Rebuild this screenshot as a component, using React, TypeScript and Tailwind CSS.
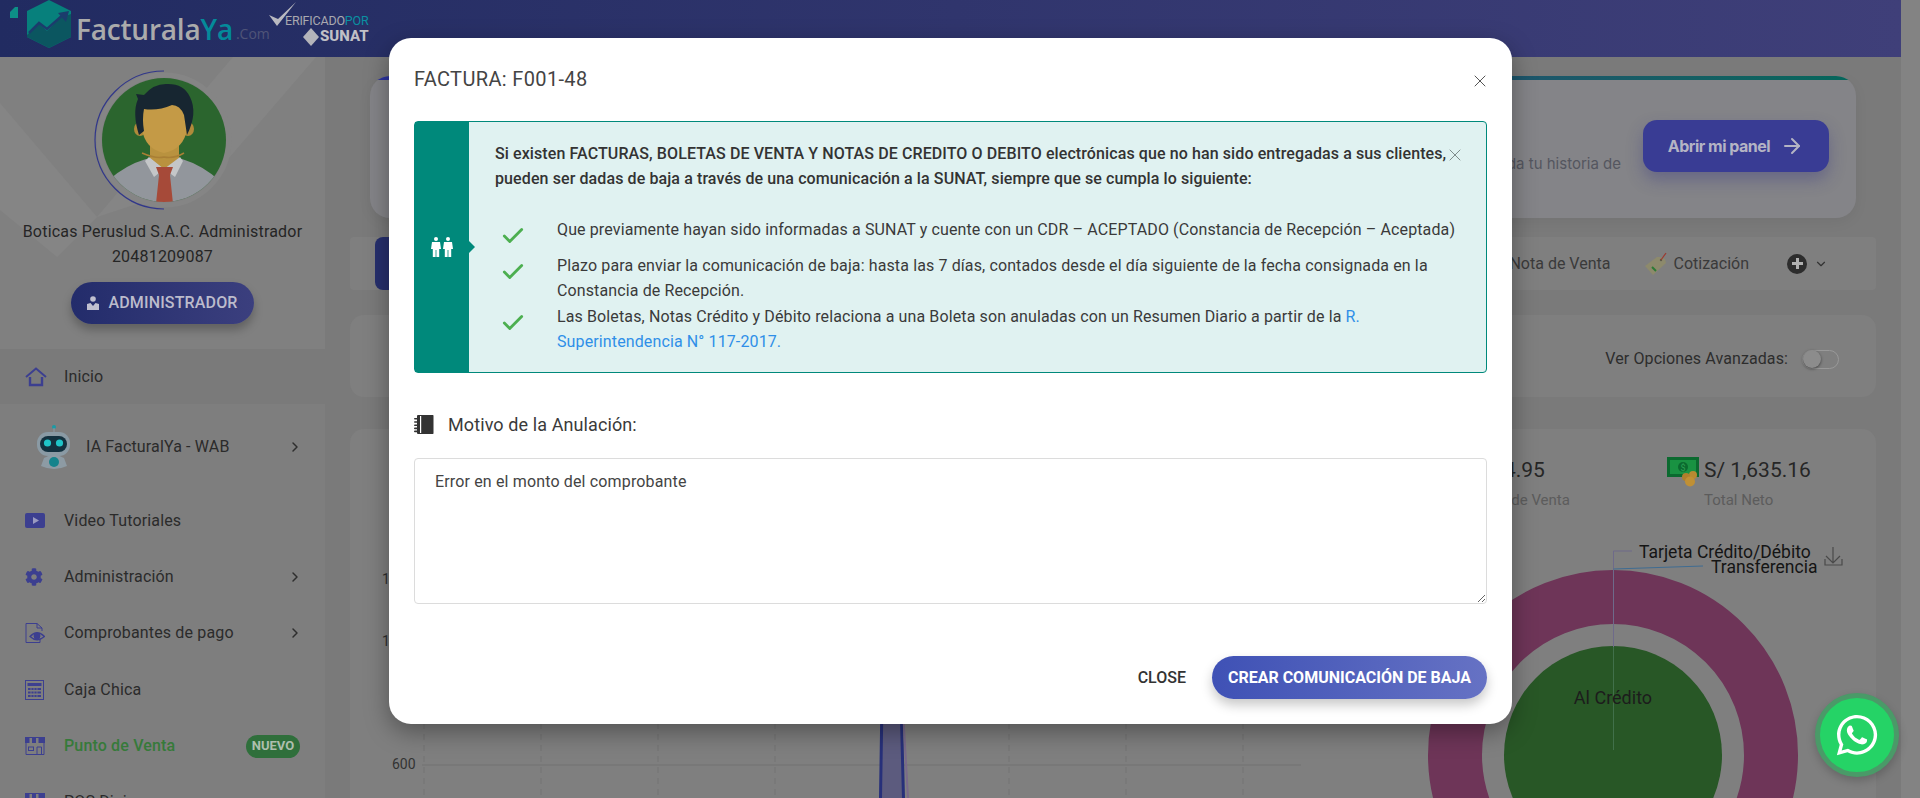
import React from "react";
import { FaWhatsapp, FaCog } from "react-icons/fa";
import { ChevronRight, ChevronDown, ArrowRight, X, Check } from "lucide-react";

const Logo = () => (
  <div className="flex items-center w-[380px] h-[57px] relative">
    <svg width="72" height="57" viewBox="0 0 72 57" className="shrink-0">
      <path d="M10 12 L15 7 L18 7 L18 18 L10 18 Z" fill="#0d8f87" />
      <polygon points="49,0 71,11 71,37 49,48 27,37 27,11" fill="#07807c" />
      <polygon points="27,35 39,24 47,31 60,18 71,14 71,37 49,48 27,37" fill="#0b5660" />
      <path d="M29 33 L39 23 L47 29 L64 14" stroke="#1b3c6c" strokeWidth="2.5" fill="none" />
      <polygon points="58,13 69,11 66,22" fill="#1b3c6c" />
    </svg>
    <span className="ml-[4px] text-[28px] leading-none font-['Open_Sans','Roboto',sans-serif] font-semibold tracking-[-0.2px] text-[#ababab]">Facturala</span>
    <span className="text-[28px] leading-none font-['Open_Sans','Roboto',sans-serif] font-semibold tracking-[-0.2px] text-[#048a9a]">Ya</span>
    <span className="ml-[3px] text-[14px] mt-[10px] text-[#4f5478] font-['Open_Sans',sans-serif]">.Com</span>
  </div>
);

const Sunat = () => (
  <div className="relative w-[100px] h-[57px] ml-[-112px] shrink-0 font-['Roboto',sans-serif]">
    <svg width="30" height="28" viewBox="0 0 30 28" className="absolute left-[0px] top-[1px]">
      <path d="M1 14 L9 25 L28 1 L10 18 Z" fill="#b9b9c0" />
    </svg>
    <div className="absolute left-[17px] top-[14px] text-[12.5px] leading-[14px] tracking-[-0.2px] whitespace-nowrap text-[#a9a9b0]">
      ERIFICADO<span className="text-[#0a90a2]">POR</span>
    </div>
    <svg width="16" height="18" viewBox="0 0 16 18" className="absolute left-[35px] top-[28px]">
      <polygon points="8,0 16,9 8,18 0,9" fill="#b4b4ba" />
    </svg>
    <div className="absolute left-[52px] top-[29px] text-[15px] leading-[15px] font-extrabold text-[#c0c0c6]">SUNAT</div>
  </div>
);

const Avatar = () => (
  <svg width="140" height="144" viewBox="0 0 140 144" className="shrink-0">
    <circle cx="72" cy="71" r="65" fill="none" stroke="#858585" strokeWidth="5" />
    <path d="M72 2 A69 69 0 0 0 72 140" fill="none" stroke="#31378a" strokeWidth="1.2" />
    <clipPath id="av"><circle cx="72" cy="71" r="62" /></clipPath>
    <g clipPath="url(#av)">
      <rect x="0" y="0" width="144" height="144" fill="#2b652e" />
      <path d="M18 110 Q34 96 54 90 L90 90 Q110 96 128 112 L128 144 L18 144 Z" fill="#92969c" />
      <path d="M58 66 L87 66 L87 92 L72 106 L58 92 Z" fill="#b9923f" />
      <ellipse cx="48" cy="60" rx="6" ry="7" fill="#b08a3a" />
      <ellipse cx="96" cy="60" rx="6" ry="7" fill="#b08a3a" />
      <path d="M50 36 L95 36 L95 60 Q92 80 72 84 Q53 80 50 60 Z" fill="#c49a46" />
      <path d="M50 84 Q64 90 72 88 Q82 90 92 84" fill="none" stroke="#a97f35" strokeWidth="1.5" />
      <path d="M47 66 Q40 44 46 30 L44 25 L52 26 Q62 14 76 15 Q92 15 98 28 Q106 44 95 66 L92 46 Q88 36 80 36 Q66 42 52 40 Q50 50 52 62 Z" fill="#172631" />
      <path d="M57 88 L72 100 L62 108 L53 92 Z M88 88 L72 100 L83 108 L91 92 Z" fill="#c4c6c8" />
      <path d="M64 98 L81 98 L78 106 L82 144 L63 144 L67 106 Z" fill="#a64a39" />
    </g>
  </svg>
);

const c = "#3c3f90";
const IconHome = () => (
  <svg width="22" height="20" viewBox="0 0 22 20"><path d="M1 10 L11 1.5 L21 10" fill="none" stroke={c} strokeWidth="2" /><path d="M5 10 V18 H17 V10" fill="none" stroke={c} strokeWidth="2.4" /></svg>
);
const IconVideo = () => (
  <svg width="20" height="16" viewBox="0 0 20 16"><rect width="20" height="15" rx="2" fill={c} /><polygon points="8,4 14,7.5 8,11" fill="#9a9ac0" /></svg>
);
const IconDoc = () => (
  <svg width="20" height="20" viewBox="0 0 20 20" fill="none" stroke={c} strokeWidth="1"><path d="M1 .5 H12 L17 5 V8 M1 .5 V19.5 H15 V17" /><path d="M12 .5 V5 H17" /><path d="M5 13.5 Q12 6 19.5 13.5 Q12 20 5 13.5Z" strokeWidth="1.3" /><circle cx="12" cy="13" r="3" fill={c} /></svg>
);
const IconCalc = () => (
  <svg width="19" height="20" viewBox="0 0 19 20"><rect x=".5" y=".5" width="18" height="19" fill="none" stroke={c} /><rect x="2.5" y="3" width="14" height="3" fill={c} /><g fill={c}><rect x="3" y="8" width="13" height="2" /><rect x="3" y="11.5" width="13" height="2" /><rect x="3" y="15" width="13" height="2" /></g><g fill="#7e7e7e"><rect x="5.6" y="8" width=".8" height="9" /><rect x="8.6" y="8" width=".8" height="9" /><rect x="11.6" y="8" width=".8" height="9" /></g></svg>
);
const IconStore = () => (
  <svg width="20" height="18" viewBox="0 0 20 18"><rect y="0" width="20" height="6" fill={c} /><rect x="4.5" y="1" width="2.5" height="5" fill="#7e7e7e" /><rect x="11" y="1" width="2.5" height="5" fill="#7e7e7e" /><path d="M1 6 V17.5 H19 V6" fill="none" stroke={c} /><rect x="3.5" y="10" width="5" height="3.5" fill="none" stroke={c} /><path d="M12 17 V10 H16.5 V17" fill="none" stroke={c} /></svg>
);
const IconRobot = () => (
  <svg width="36" height="46" viewBox="0 0 36 46">
    <circle cx="18" cy="3" r="2" fill="#1b9aa5" /><rect x="17.5" y="4" width="1" height="4" fill="#8a9aa5" />
    <rect x="1" y="8" width="33" height="24" rx="11" fill="#8a9aa4" />
    <rect x="4" y="12" width="27" height="16" rx="8" fill="#13313f" />
    <circle cx="11.5" cy="19" r="3.6" fill="#1fc4c8" /><circle cx="23.5" cy="19" r="3.6" fill="#1fc4c8" />
    <path d="M8 34 Q18 28 28 34 L31 42 Q18 48 5 42Z" fill="#8d9ba4" />
    <circle cx="18" cy="38" r="5" fill="#15838c" />
  </svg>
);

const Row = ({ icon, label, chevron, className = "h-[56px]", text = "text-[#2b2b2b]", extra }: { icon: React.ReactNode; label: string; chevron?: boolean; className?: string; text?: string; extra?: React.ReactNode }) => (
  <div className={`flex items-center pl-[25px] pr-[25px] shrink-0 ${className}`}>
    <div className="w-[39px] shrink-0 flex items-center">{icon}</div>
    <span className={`text-[16px] tracking-[0.15px] flex-1 whitespace-nowrap ${text}`}>{label}</span>
    {chevron && <ChevronRight size={16} strokeWidth={2.2} className="text-[#2e2e2e] mr-[-3px]" />}
    {extra}
  </div>
);

const Sidebar = () => (
  <aside className="w-[325px] shrink-0 bg-[#7e7e7e] flex flex-col">
    <div className="relative h-[292px] bg-[#808080] shrink-0 flex flex-col items-center overflow-hidden">
      <svg width="325" height="292" viewBox="0 0 325 292" className="absolute inset-0">
        <polygon points="0,46 97,160 57,200 0,153" fill="#858585" />
        <polygon points="233,0 316,0 210,123 97,160" fill="#858585" />
      </svg>
      <div className="relative flex flex-col items-center w-full">
        <div className="mt-[12px] ml-[-2px] h-[144px]"><Avatar /></div>
        <div className="mt-[6px] text-[16px] leading-[25px] text-[#252525] text-center whitespace-nowrap tracking-[0.2px]">
          Boticas Peruslud S.A.C. Administrador
          <br />
          20481209087
        </div>
        <div className="mt-[13px] w-[183px] h-[42px] rounded-full bg-gradient-to-r from-[#232c6b] to-[#3b3f7e] shadow-[0_6px_10px_rgba(0,0,0,0.25)] flex items-center justify-center gap-[9px]">
          <svg width="12" height="14" viewBox="0 0 12 14"><circle cx="6" cy="3" r="2.8" fill="#c0c0d0" /><path d="M0 14 V8 L3.5 7 L6 10 L8.5 7 L12 8 V14Z" fill="#c0c0d0" /></svg>
          <span className="text-[16px] tracking-[0.15px] font-medium text-[#bcbccc]">ADMINISTRADOR</span>
        </div>
      </div>
    </div>
    <Row icon={<IconHome />} label="Inicio" className="h-[55px] bg-[#7a7a7a]" />
    <div className="flex items-center pl-[36px] pr-[25px] h-[86px] shrink-0">
      <div className="w-[50px] shrink-0"><IconRobot /></div>
      <span className="text-[16px] tracking-[0.15px] flex-1 text-[#2b2b2b] whitespace-nowrap">IA FacturalYa - WAB</span>
      <ChevronRight size={16} strokeWidth={2.2} className="text-[#2e2e2e] mr-[-3px]" />
    </div>
    <div className="h-[3px] shrink-0" />
    <Row icon={<IconVideo />} label="Video Tutoriales" />
    <Row icon={<FaCog size={18} color={c} />} label="Administración" chevron />
    <Row icon={<IconDoc />} label="Comprobantes de pago" chevron />
    <Row icon={<IconCalc />} label="Caja Chica" className="h-[57px]" />
    <Row
      icon={<IconStore />}
      label="Punto de Venta"
      text="text-[#367a3a] font-medium"
      extra={<span className="w-[54px] h-[23px] rounded-full bg-[#2f6f3b] text-[#aebfae] text-[13px] font-bold flex items-center justify-center">NUEVO</span>}
    />
    <Row icon={<IconStore />} label="POS Dinix" />
  </aside>
);

const Tag = () => (
  <svg width="24" height="24" viewBox="0 0 24 24"><polygon points="16,5 21,7 22,11 9,23 1,14 13,5" fill="#8d8a6c" /><circle cx="17" cy="8" r="1.2" fill="#5b5b4c" /><path d="M17 8 L22 1" stroke="#9c3a30" strokeWidth="1.2" /><path d="M8 15 L12 19" stroke="#2d7a35" strokeWidth="2" /></svg>
);
const Money = () => (
  <svg width="32" height="30" viewBox="0 0 32 30"><rect x="0" y="0" width="32" height="20" fill="#0b6a2f" /><rect x="3" y="3" width="26" height="14" fill="#199242" /><circle cx="16" cy="10" r="5" fill="#0b6a2f" /><text x="16" y="13.5" fontSize="9" textAnchor="middle" fill="#2aa052" fontFamily="Roboto">$</text><circle cx="26" cy="18" r="4" fill="#b88a32" /><circle cx="19" cy="20" r="4" fill="#b07f2c" /><circle cx="23" cy="24.5" r="5" fill="#c09035" /></svg>
);

const LineChart = () => (
  <svg width="1050" height="369" viewBox="350 429 1050 369" className="shrink-0" fontFamily="Roboto, sans-serif">
    {[424, 541, 658, 775, 892, 1009, 1126, 1243].map((x) => (
      <line key={x} x1={x} x2={x} y1="470" y2="798" stroke="#757575" strokeDasharray="6 5" />
    ))}
    <line x1="422" x2="1301" y1="765" y2="765" stroke="#767676" strokeWidth="1.5" />
    <line x1="422" x2="1301" y1="703" y2="703" stroke="#767676" />
    <text x="382" y="584" fontSize="14" fill="#2e2e2e">1,200</text>
    <text x="382" y="646" fontSize="14" fill="#2e2e2e">1,000</text>
    <text x="392" y="769" fontSize="14" fill="#333">600</text>
    <polygon points="880,798 881,700 902,700 904,798" fill="#5c5b7e" />
    <path d="M880.5 798 L882 700 M903.5 798 L901 700" stroke="#27307a" strokeWidth="3" fill="none" />
    <path d="M903 710 L908 798" stroke="#7a6a8a" strokeWidth="2" fill="none" />
  </svg>
);

const Donut = () => (
  <svg width="476" height="310" viewBox="1400 488 476 310" className="shrink-0 -mt-[22px]" fontFamily="Roboto, sans-serif">
    <circle cx="1613" cy="755" r="158" fill="none" stroke="#6e3558" strokeWidth="54" />
    <circle cx="1613" cy="755" r="109" fill="#285726" />
    <path d="M1632 551 H1613.5 V700" fill="none" stroke="#6e6a8a" strokeWidth="1" />
    <path d="M1613.5 569 L1703 566" fill="none" stroke="#3f6c92" strokeWidth="1" />
    <line x1="1613.5" x2="1613.5" y1="647" y2="750" stroke="#41704a" />
    <text x="1639" y="558" fontSize="17.5" fill="#141414">Tarjeta Crédito/Débito</text>
    <text x="1711" y="573" fontSize="17.5" fill="#141414">Transferencia</text>
    <text x="1613" y="704" fontSize="18" fill="#1c1c1c" textAnchor="middle">Al Crédito</text>
    <path d="M1833 547 V563 M1826 556 L1833 563 L1840 556" fill="none" stroke="#4a4a4a" strokeWidth="1.2" />
    <path d="M1825 559 V565 H1842 V559" fill="none" stroke="#4a4a4a" strokeWidth="1.2" />
  </svg>
);

const Stat = ({ icon, value, label, className }: { icon?: React.ReactNode; value: string; label: string; className: string }) => (
  <div className={`flex ${className}`}>
    <div className="w-[37px] shrink-0 pt-[1px]">{icon}</div>
    <div className="flex flex-col">
      <span className="text-[21px] leading-[28px] text-[#262626] whitespace-nowrap">{value}</span>
      <span className="text-[15px] leading-[20px] mt-[6px] text-[#5c5c5c] whitespace-nowrap">{label}</span>
    </div>
  </div>
);

const Main = () => (
  <main className="flex-1 bg-[#7a7a7a] px-[25px] min-w-0">
    <div className="mx-[20px] mt-[19px] h-[142px] rounded-[20px] bg-[#848488] overflow-hidden shadow-[0_4px_14px_rgba(0,0,0,0.06)] flex flex-col font-['Inter',sans-serif]">
      <div className="h-[4px] shrink-0 bg-gradient-to-r from-[#2c33a0] via-[#2b3f7c] to-[#04665a]" />
      <div className="flex-1 flex items-center justify-end pr-[27px] gap-[22px]">
        <span className="text-[15px] text-[#54565f] mt-[30px] whitespace-nowrap">Descubre toda tu historia de</span>
        <div className="w-[186px] h-[52px] mb-[6px] rounded-[14px] bg-[#393c94] shadow-[0_8px_16px_rgba(50,50,130,0.35)] flex items-center justify-center gap-[10px]">
          <span className="text-[16px] font-bold tracking-[-0.5px] text-[#b4b4c4]">Abrir mi panel</span>
          <ArrowRight size={24} strokeWidth={2} className="text-[#b4b4c4]" />
        </div>
      </div>
    </div>
    <div className="mt-[19px] h-[53px] rounded-[4px] bg-[#7f7f7f] flex items-center pl-[25px]">
      <div className="w-[180px] h-full rounded-l-[8px] bg-[#262f6d]" />
      <div className="flex-1 flex items-center justify-end pr-[48px] text-[16px] text-[#3a3a3a]">
        <span>Nota de Venta</span>
        <span className="ml-[34px] mr-[5px]"><Tag /></span>
        <span>Cotización</span>
        <span className="ml-[38px] w-[20px] h-[20px] rounded-full bg-[#2d2d2d] flex items-center justify-center">
          <svg width="13" height="13" viewBox="0 0 13 13"><path d="M6.5 1 V12 M1 6.5 H12" stroke="#b0b0b0" strokeWidth="3" /></svg>
        </span>
        <ChevronDown size={14} strokeWidth={2} className="ml-[7px] text-[#333]" />
      </div>
    </div>
    <div className="mt-[25px] h-[82px] pt-[6px] rounded-[14px] bg-[#7f7f7f] flex items-center justify-end pr-[37px]">
      <span className="text-[16px] tracking-[0.1px] text-[#2d2d2d] mr-[14px]">Ver Opciones Avanzadas:</span>
      <span className="w-[37px] h-[19px] rounded-full border border-[#999] flex items-center">
        <span className="w-[18px] h-[18px] rounded-full bg-[#8c8c8c] shadow-[0_1px_3px_rgba(0,0,0,0.5)]" />
      </span>
    </div>
    <div className="mt-[32px] h-[369px] rounded-[14px] rounded-b-none bg-[#7f7f7f] flex overflow-hidden">
      <LineChart />
      <div className="flex-1 flex flex-col">
        <div className="flex pt-[27px] h-[81px]">
          <Stat value="S/ 1,634.95" label="Total Nota de Venta" className="ml-[1px] w-[266px]" />
          <Stat icon={<Money />} value="S/ 1,635.16" label="Total Neto" className="" />
        </div>
        <Donut />
      </div>
    </div>
  </main>
);

const People = () => (
  <svg width="22" height="20" viewBox="0 0 22 20" fill="#fff">
    <circle cx="5" cy="2" r="2" /><path d="M1 5 H9 L10 12 H8.2 V20 H5.4 V13 H4.6 V20 H1.8 V12 H0 Z" />
    <circle cx="17" cy="2" r="2" /><path d="M13 5 H21 L22 12 H20.2 V20 H17.4 V13 H16.6 V20 H13.8 V12 H12 Z" />
  </svg>
);

const Notebook = () => (
  <svg width="20" height="19" viewBox="0 0 20 19" fill="#333">
    <path d="M3 1 Q3 0 4 0 H19 Q19.5 0 19.5 1 V18 Q19.5 19 19 19 H4 Q3 19 3 18 Z" />
    <rect x="6" y="1" width="1.2" height="17" fill="#fff" />
    <g><rect x="0" y="3" width="5" height="1.6" rx=".8" /><rect x="0" y="6.2" width="5" height="1.6" rx=".8" /><rect x="0" y="9.4" width="5" height="1.6" rx=".8" /><rect x="0" y="12.6" width="5" height="1.6" rx=".8" /><rect x="0" y="15.6" width="5" height="1.6" rx=".8" /></g>
  </svg>
);

const ListItem = ({ children, className = "" }: { children: React.ReactNode; className?: string }) => (
  <div className={`flex ${className}`}>
    <div className="w-[62px] shrink-0 pl-[5px] pt-[6px]"><Check size={26} strokeWidth={2.6} className="text-[#4caf50]" /></div>
    <div className="tracking-[0.12px]">{children}</div>
  </div>
);

const Modal = () => (
  <div className="absolute left-[389px] top-[38px] w-[1123px] h-[686px] rounded-[22px] bg-white shadow-[0_8px_24px_rgba(0,0,0,0.35)] px-[25px] text-[#3a3a3a]">
    <div className="flex items-center justify-between h-[83px] pb-[1px]">
      <span className="text-[20px] tracking-[0.35px] text-[#444]">FACTURA: F001-48</span>
      <X size={20} strokeWidth={1.2} className="text-[#555] mr-[-3px] mt-[3px]" />
    </div>
    <div className="relative flex h-[252px] rounded-[4px] border border-[#00897b] bg-[#e0f2f1] text-[16px] leading-[25px]">
      <div className="relative w-[54px] shrink-0 bg-[#00897b] flex items-center justify-center">
        <People />
        <span className="absolute left-full top-[119px] border-y-[6px] border-l-[6px] border-y-transparent border-l-[#00897b]" />
      </div>
      <div className="pl-[26px] pr-[24px] pt-[19px] flex-1">
        <p className="font-medium text-[#333] tracking-[0.1px]">
          Si existen FACTURAS, BOLETAS DE VENTA Y NOTAS DE CREDITO O DEBITO electrónicas que no han sido entregadas a sus clientes, pueden ser dadas de baja a través de una comunicación a la SUNAT, siempre que se cumpla lo siguiente:
        </p>
        <ListItem className="mt-[26px]">Que previamente hayan sido informadas a SUNAT y cuente con un CDR – ACEPTADO (Constancia de Recepción – Aceptada)</ListItem>
        <ListItem className="mt-[4px]">Plazo para enviar la comunicación de baja: hasta las 7 días, contados desde el día siguiente de la fecha consignada en la Constancia de Recepción.</ListItem>
        <ListItem className="mt-[1px]">
          Las Boletas, Notas Crédito y Débito relaciona a una Boleta son anuladas con un Resumen Diario a partir de la <span className="text-[#2f8fe8]">R. Superintendencia N° 117-2017.</span>
        </ListItem>
      </div>
      <X size={20} strokeWidth={1.2} className="absolute left-[1030px] top-[23px] text-[#7f8c8c]" />
    </div>
    <div className="flex items-center h-[85px] pt-[17px]">
      <Notebook />
      <span className="ml-[14px] text-[18px] tracking-[0.1px] text-[#3a3a3a]">Motivo de la Anulación:</span>
    </div>
    <textarea
      defaultValue="Error en el monto del comprobante"
      className="block w-full h-[146px] rounded-[4px] border border-[#dcdcdc] px-[20px] pt-[11px] text-[16px] tracking-[0.15px] leading-[24px] text-[#444] outline-none"
    />
    <div className="flex items-center justify-end mt-[52px]">
      <span className="text-[16px] font-medium text-[#333] mr-[26px]">CLOSE</span>
      <div className="w-[275px] h-[43px] rounded-full bg-gradient-to-r from-[#3f51b5] to-[#6672c4] shadow-[0_6px_12px_rgba(0,0,0,0.22)] flex items-center justify-center text-[16px] font-bold text-white whitespace-nowrap">
        CREAR COMUNICACIÓN DE BAJA
      </div>
    </div>
  </div>
);

export default function App() {
  return (
    <div className="relative w-[1920px] h-[798px] overflow-hidden flex font-['Roboto',sans-serif] bg-[#7a7a7a]">
      <div className="w-[1901px] shrink-0 flex flex-col h-full">
        <header className="relative h-[57px] shrink-0 bg-gradient-to-r from-[#212b61] to-[#3f3f79] flex items-center">
          <Logo />
          <Sunat />
        </header>
        <div className="flex flex-1 min-h-0">
          <Sidebar />
          <Main />
        </div>
      </div>
      <div className="w-[19px] shrink-0 h-full bg-[#838383]" />
      <Modal />
      <div className="absolute left-[1815px] top-[693px] w-[84px] h-[84px] rounded-full bg-[#25d366] border-[5px] border-[#4a9a68] shadow-[0_4px_10px_rgba(0,0,0,0.2)] flex items-center justify-center">
        <FaWhatsapp size={46} color="#fff" />
      </div>
    </div>
  );
}
